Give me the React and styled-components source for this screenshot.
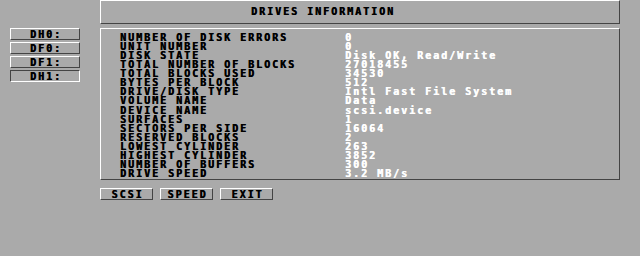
import React from "react";
import styled, { createGlobalStyle, css } from "styled-components";

const GlobalStyle = createGlobalStyle`
  html, body {
    margin: 0;
    padding: 0;
    background: #aaaaaa;
  }
  body {
    width: 640px;
    height: 256px;
    overflow: hidden;
    font-family: "DejaVu Sans Mono", "Liberation Mono", monospace;
  }
`;

const LIGHT = "#ffffff";
const DARK = "#444444";

const bevel = css`
  border-style: solid;
  border-width: 1px;
  border-color: ${(p) =>
    p.$selected
      ? `${DARK} ${LIGHT} ${LIGHT} ${DARK}`
      : `${LIGHT} ${DARK} ${DARK} ${LIGHT}`};
`;

const Screen = styled.div`
  display: flex;
  width: 640px;
  height: 256px;
  background: #aaaaaa;
`;

const DriveColumn = styled.div`
  display: flex;
  flex-direction: column;
  gap: 2px;
  flex: 0 0 100px;
  padding: 28px 0 0 10px;
  box-sizing: border-box;
`;

const pixelText = css`
  font-family: "DejaVu Sans Mono", "Liberation Mono", monospace;
  font-weight: bold;
  font-size: 10px;
  letter-spacing: 1.98px;
  line-height: 8.4px;
  white-space: pre;
  text-shadow: 0.4px 0 currentColor;
`;

const GadgetButton = styled.div`
  ${bevel};
  ${pixelText};
  box-sizing: border-box;
  width: ${(p) => p.$width}px;
  height: 12px;
  padding-top: 2px;
  padding-left: 2px;
  text-align: center;
  color: #000000;
  background: #aaaaaa;
`;

const MainColumn = styled.div`
  display: flex;
  flex-direction: column;
  flex: 0 0 520px;
`;

const TitleBar = styled.div`
  ${bevel};
  ${pixelText};
  box-sizing: border-box;
  height: 24px;
  padding: 7px 0 0 150px;
  color: #000000;
`;

const InfoPanel = styled.div`
  ${bevel};
  box-sizing: border-box;
  height: 152px;
  margin-top: 4px;
  padding: 5px 0 0 19px;
  display: grid;
  grid-template-columns: 225px 1fr;
`;

const Label = styled.div`
  ${pixelText};
  color: #000000;
`;

const Value = styled.div`
  ${pixelText};
  color: #ffffff;
`;

const ButtonRow = styled.div`
  display: flex;
  gap: 7px;
  margin-top: 8px;
`;

const rows = [
  ["NUMBER OF DISK ERRORS", "0"],
  ["UNIT NUMBER", "0"],
  ["DISK STATE", "Disk OK, Read/Write"],
  ["TOTAL NUMBER OF BLOCKS", "27018455"],
  ["TOTAL BLOCKS USED", "34530"],
  ["BYTES PER BLOCK", "512"],
  ["DRIVE/DISK TYPE", "Intl Fast File System"],
  ["VOLUME NAME", "Data"],
  ["DEVICE NAME", "scsi.device"],
  ["SURFACES", "1"],
  ["SECTORS PER SIDE", "16064"],
  ["RESERVED BLOCKS", "2"],
  ["LOWEST CYLINDER", "263"],
  ["HIGHEST CYLINDER", "3852"],
  ["NUMBER OF BUFFERS", "300"],
  ["DRIVE SPEED", "3.2 MB/s"],
];

const drives = ["DH0:", "DF0:", "DF1:", "DH1:"];

export default function App() {
  return (
    <>
      <GlobalStyle />
      <Screen>
        <DriveColumn>
          {drives.map((d) => (
            <GadgetButton key={d} $width={70} $selected={d === "DH1:"}>
              {d}
            </GadgetButton>
          ))}
        </DriveColumn>
        <MainColumn>
          <TitleBar>DRIVES INFORMATION</TitleBar>
          <InfoPanel>
            {rows.map(([l, v]) => (
              <React.Fragment key={l}>
                <Label>{l}</Label>
                <Value>{v}</Value>
              </React.Fragment>
            ))}
          </InfoPanel>
          <ButtonRow>
            <GadgetButton $width={53}>SCSI</GadgetButton>
            <GadgetButton $width={53}>SPEED</GadgetButton>
            <GadgetButton $width={53}>EXIT</GadgetButton>
          </ButtonRow>
        </MainColumn>
      </Screen>
    </>
  );
}
